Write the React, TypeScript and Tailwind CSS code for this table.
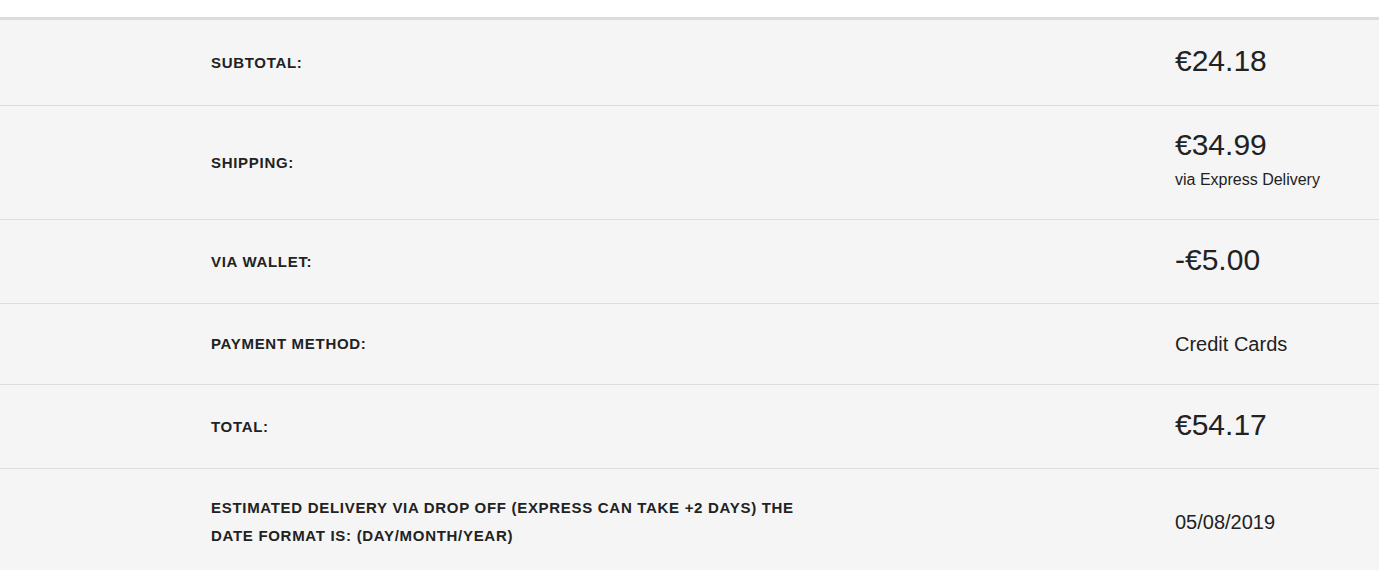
const rows: { label: string; value: React.ReactNode; h: string }[] = [
  { label: 'Subtotal:', value: <Price>€24.18</Price>, h: 'h-[86px]' },
  {
    label: 'Shipping:',
    value: (
      <div className="pb-[10px]">
        <Price>€34.99</Price>
        <div className="mt-[1px] text-[16px] leading-[20px]">via Express Delivery</div>
      </div>
    ),
    h: 'h-[114px]',
  },
  { label: 'Via wallet:', value: <Price>-€5.00</Price>, h: 'h-[84px]' },
  { label: 'Payment method:', value: <div className="text-[20px] leading-[28px]">Credit Cards</div>, h: 'h-[81px]' },
  { label: 'Total:', value: <Price>€54.17</Price>, h: 'h-[84px]' },
  {
    label: 'Estimated delivery via drop off (express can take +2 days) the date format is: (day/month/year)',
    value: <div className="text-[20px] leading-[28px]">05/08/2019</div>,
    h: 'h-[106px]',
  },
];

function Price({ children }: { children: React.ReactNode }) {
  return <div className="pb-[4px] text-[30px] leading-[40px]">{children}</div>;
}

export default function App() {
  return (
    <div className="min-h-[570px] bg-white pt-[17px] font-['Liberation_Sans',Arial,sans-serif] text-[#222]">
      <div className="border-t-[3px] border-[#dcdcdc] bg-[#f5f5f5]">
        {rows.map((r, i) => (
          <div
            key={r.label}
            className={`flex items-center pl-[211px] ${r.h} ${i < rows.length - 1 ? 'border-b border-[#dddddd]' : ''}`}
          >
            <div className="w-[964px] shrink-0">
              <div className="max-w-[610px] text-[15px] font-bold uppercase leading-[28px] tracking-[0.7px]">
                {r.label}
              </div>
            </div>
            <div>{r.value}</div>
          </div>
        ))}
      </div>
    </div>
  );
}
